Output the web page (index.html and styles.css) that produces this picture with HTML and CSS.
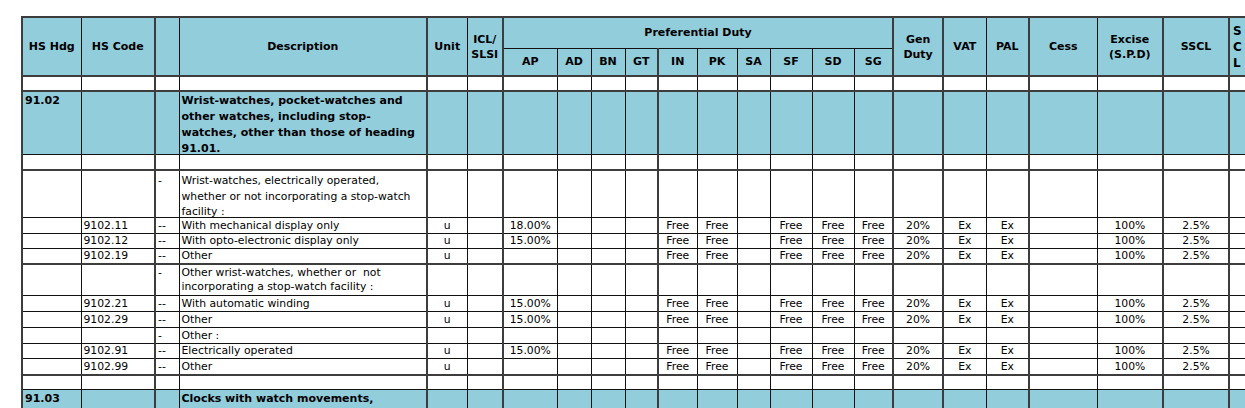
FILE: index.html
```html
<!DOCTYPE html>
<html lang="en">
<head>
<meta charset="utf-8">
<title>Tariff - Chapter 91</title>
<link rel="stylesheet" href="styles.css">
</head>
<body>
<div class="page">
<table class="tariff">
  <colgroup>
    <col class="w59 tk"><col class="w74"><col class="w24 tk"><col class="w248"><col class="w40 tk"><col class="w36">
    <col class="w54 tk"><col class="w34"><col class="w34"><col class="w33"><col class="w39 tk"><col class="w40"><col class="w33"><col class="w42"><col class="w42"><col class="w39">
    <col class="w50 tk"><col class="w43 tk"><col class="w43"><col class="w68 tk"><col class="w66"><col class="w66 tk"><col class="w40 tk">
  </colgroup>
  <thead>
    <tr class="hr1">
      <th rowspan="2">HS Hdg</th>
      <th rowspan="2">HS Code</th>
      <th rowspan="2"></th>
      <th rowspan="2">Description</th>
      <th rowspan="2">Unit</th>
      <th rowspan="2">ICL/<br>SLSI</th>
      <th colspan="10">Preferential Duty</th>
      <th rowspan="2">Gen<br>Duty</th>
      <th rowspan="2">VAT</th>
      <th rowspan="2">PAL</th>
      <th rowspan="2">Cess</th>
      <th rowspan="2">Excise<br>(S.P.D)</th>
      <th rowspan="2">SSCL</th>
      <th rowspan="2" class="scl">S<br>C<br>L</th>
    </tr>
    <tr class="hr2">
      <th>AP</th><th>AD</th><th>BN</th><th>GT</th><th>IN</th><th>PK</th><th>SA</th><th>SF</th><th>SD</th><th>SG</th>
    </tr>
  </thead>
  <tbody>
    <tr class="r15 tkrow"><td></td><td></td><td></td><td></td><td></td><td></td><td></td><td></td><td></td><td></td><td></td><td></td><td></td><td></td><td></td><td></td><td></td><td></td><td></td><td></td><td></td><td></td><td></td></tr>
    <tr class="heading r63 tkrow">
      <td class="bold top">91.02</td><td></td><td></td>
      <td class="bold top"><div class="clip c60">Wrist-watches, pocket-watches and other watches, including stop-watches, other than those of heading 91.01.</div></td>
      <td></td><td></td><td></td><td></td><td></td><td></td><td></td><td></td><td></td><td></td><td></td><td></td><td></td><td></td><td></td><td></td><td></td><td></td><td></td>
    </tr>
    <tr class="r16"><td></td><td></td><td></td><td></td><td></td><td></td><td></td><td></td><td></td><td></td><td></td><td></td><td></td><td></td><td></td><td></td><td></td><td></td><td></td><td></td><td></td><td></td><td></td></tr>
    <tr class="r47 tkrow">
      <td></td><td></td>
      <td class="top wrapcell">-</td>
      <td class="top wrapcell"><div class="clip c43">Wrist-watches, electrically operated, whether or not incorporating a stop-watch facility :</div></td>
      <td></td><td></td><td></td><td></td><td></td><td></td><td></td><td></td><td></td><td></td><td></td><td></td><td></td><td></td><td></td><td></td><td></td><td></td><td></td>
    </tr>
    <tr class="r16"><td></td><td>9102.11</td><td>--</td><td>With mechanical display only</td><td>u</td><td></td><td>18.00%</td><td></td><td></td><td></td><td>Free</td><td>Free</td><td></td><td>Free</td><td>Free</td><td>Free</td><td>20%</td><td>Ex</td><td>Ex</td><td></td><td>100%</td><td>2.5%</td><td></td></tr>
    <tr class="r15"><td></td><td>9102.12</td><td>--</td><td>With opto-electronic display only</td><td>u</td><td></td><td>15.00%</td><td></td><td></td><td></td><td>Free</td><td>Free</td><td></td><td>Free</td><td>Free</td><td>Free</td><td>20%</td><td>Ex</td><td>Ex</td><td></td><td>100%</td><td>2.5%</td><td></td></tr>
    <tr class="r16"><td></td><td>9102.19</td><td>--</td><td>Other</td><td>u</td><td></td><td></td><td></td><td></td><td></td><td>Free</td><td>Free</td><td></td><td>Free</td><td>Free</td><td>Free</td><td>20%</td><td>Ex</td><td>Ex</td><td></td><td>100%</td><td>2.5%</td><td></td></tr>
    <tr class="r31 tkrow">
      <td></td><td></td>
      <td class="top wrap2">-</td>
      <td class="top wrap2"><div class="clip c29">Other wrist-watches, whether or &nbsp;not incorporating a stop-watch facility :</div></td>
      <td></td><td></td><td></td><td></td><td></td><td></td><td></td><td></td><td></td><td></td><td></td><td></td><td></td><td></td><td></td><td></td><td></td><td></td><td></td>
    </tr>
    <tr class="r16"><td></td><td>9102.21</td><td>--</td><td>With automatic winding</td><td>u</td><td></td><td>15.00%</td><td></td><td></td><td></td><td>Free</td><td>Free</td><td></td><td>Free</td><td>Free</td><td>Free</td><td>20%</td><td>Ex</td><td>Ex</td><td></td><td>100%</td><td>2.5%</td><td></td></tr>
    <tr class="r16"><td></td><td>9102.29</td><td>--</td><td>Other</td><td>u</td><td></td><td>15.00%</td><td></td><td></td><td></td><td>Free</td><td>Free</td><td></td><td>Free</td><td>Free</td><td>Free</td><td>20%</td><td>Ex</td><td>Ex</td><td></td><td>100%</td><td>2.5%</td><td></td></tr>
    <tr class="r16"><td></td><td></td><td>-</td><td>Other :</td><td></td><td></td><td></td><td></td><td></td><td></td><td></td><td></td><td></td><td></td><td></td><td></td><td></td><td></td><td></td><td></td><td></td><td></td><td></td></tr>
    <tr class="r15"><td></td><td>9102.91</td><td>--</td><td>Electrically operated</td><td>u</td><td></td><td>15.00%</td><td></td><td></td><td></td><td>Free</td><td>Free</td><td></td><td>Free</td><td>Free</td><td>Free</td><td>20%</td><td>Ex</td><td>Ex</td><td></td><td>100%</td><td>2.5%</td><td></td></tr>
    <tr class="r16"><td></td><td>9102.99</td><td>--</td><td>Other</td><td>u</td><td></td><td></td><td></td><td></td><td></td><td>Free</td><td>Free</td><td></td><td>Free</td><td>Free</td><td>Free</td><td>20%</td><td>Ex</td><td>Ex</td><td></td><td>100%</td><td>2.5%</td><td></td></tr>
    <tr class="r15 tkrow"><td></td><td></td><td></td><td></td><td></td><td></td><td></td><td></td><td></td><td></td><td></td><td></td><td></td><td></td><td></td><td></td><td></td><td></td><td></td><td></td><td></td><td></td><td></td></tr>
    <tr class="heading r63">
      <td class="bold top">91.03</td><td></td><td></td>
      <td class="bold top"><div class="clip c60">Clocks with watch movements, excluding clocks of heading 91.05.</div></td>
      <td></td><td></td><td></td><td></td><td></td><td></td><td></td><td></td><td></td><td></td><td></td><td></td><td></td><td></td><td></td><td></td><td></td><td></td><td></td>
    </tr>
  </tbody>
</table>
</div>
</body>
</html>
```

FILE: styles.css
```css
html, body {
  margin: 0;
  padding: 0;
  background: #ffffff;
  overflow: hidden;
}

.page {
  padding: 16px 0 0 21px;
}

.tariff {
  border-collapse: collapse;
  table-layout: fixed;
  width: 1247px;
  font-family: "DejaVu Sans", sans-serif;
  font-size: 10.8px;
  color: #000;
  border-top: 2px solid #3d3d3d;
}

.w24 { width: 24px; }
.w33 { width: 33px; }
.w34 { width: 34px; }
.w36 { width: 36px; }
.w39 { width: 39px; }
.w40 { width: 40px; }
.w42 { width: 42px; }
.w43 { width: 43px; }
.w50 { width: 50px; }
.w54 { width: 54px; }
.w59 { width: 59px; }
.w66 { width: 66px; }
.w68 { width: 68px; }
.w74 { width: 74px; }
.w248 { width: 248px; }

col.tk {
  border-left: 2px solid #3d3d3d;
}

.tariff th,
.tariff td {
  border: 1px solid #111;
  padding: 0 2px;
  white-space: nowrap;
}

.tariff th {
  background: #92cddc;
  font-weight: bold;
  font-size: 11px;
  line-height: 15px;
  text-align: center;
  vertical-align: middle;
}

.tariff th.scl {
  text-align: left;
  padding-left: 3px;
  font-size: 12px;
  line-height: 16px;
}

.hr1 { height: 31px; }
.hr2 { height: 28px; }

.tariff tbody tr.tkrow {
  border-top: 2px solid #3d3d3d;
}

.tariff td {
  line-height: 14px;
  text-align: center;
  vertical-align: bottom;
}

.tariff td:nth-child(-n+4) {
  text-align: left;
}

.r15 { height: 15px; }
.r16 { height: 16px; }
.r31 { height: 31px; }
.r47 { height: 47px; }
.r63 { height: 63px; }

.heading td {
  background: #92cddc;
}

.tariff td.bold {
  font-weight: bold;
  font-size: 11px;
  line-height: 16px;
  padding-top: 1px;
}

.tariff td.top {
  vertical-align: top;
  white-space: normal;
}

.tariff td.wrapcell {
  line-height: 15.6px;
  padding-top: 2px;
}

.tariff td.wrap2 {
  line-height: 14px;
  padding-top: 1px;
}

.clip { overflow: visible; }
.c60 { height: 60px; }
.c43 { height: 43px; }
.c29 { height: 29px; }
```
